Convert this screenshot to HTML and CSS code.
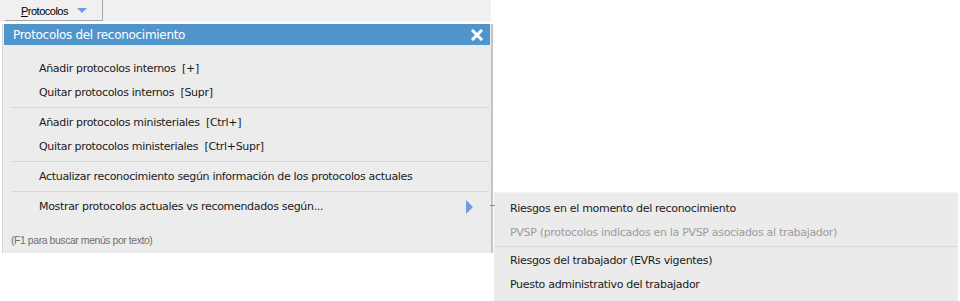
FILE: index.html
```html
<!DOCTYPE html>
<html lang="es">
<head>
  <meta charset="UTF-8" />
  <title>Protocolos</title>
  <link rel="stylesheet" href="styles.css">
</head>
<body>
  <div class="toolbar">
    <div class="menu-btn"><span class="btn-label"><u>P</u>rotocolos</span><span class="caret"></span></div>
  </div>

  <div class="panel">
    <div class="panel-head">
      <span>Protocolos del reconocimiento</span>
      <svg class="close" width="12" height="12" viewBox="0 0 12 12">
        <path d="M2 2 L10 10 M10 2 L2 10" stroke="#fff" stroke-width="3" stroke-linecap="square" />
      </svg>
    </div>

    <div class="menu">
      <div class="item">Añadir protocolos internos&nbsp; [+]</div>
      <div class="item">Quitar protocolos internos&nbsp; [Supr]</div>
      <div class="sep"></div>
      <div class="item">Añadir protocolos ministeriales&nbsp; [Ctrl+]</div>
      <div class="item">Quitar protocolos ministeriales&nbsp; [Ctrl+Supr]</div>
      <div class="sep"></div>
      <div class="item">Actualizar reconocimiento según información de los protocolos actuales</div>
      <div class="sep"></div>
      <div class="item has-sub">
        <span>Mostrar protocolos actuales vs recomendados según...</span>
        <span class="arrow"></span>
      </div>
    </div>

    <div class="hint">(F1 para buscar menús por texto)</div>
  </div>

  <div class="submenu">
    <span class="link-line"></span>
    <div class="item">Riesgos en el momento del reconocimiento</div>
    <div class="item disabled">PVSP (protocolos indicados en la PVSP asociados al trabajador)</div>
    <div class="sep"></div>
    <div class="item">Riesgos del trabajador (EVRs vigentes)</div>
    <div class="item">Puesto administrativo del trabajador</div>
  </div>
</body>
</html>
```

FILE: styles.css
```css
body {
  margin: 0;
  background: #fff;
  font-family: "DejaVu Sans", Verdana, sans-serif;
  font-size: 11px;
  letter-spacing: -0.32px;
  color: #1a1a1a;
}

.toolbar {
  width: 491px;
  height: 22px;
  background: #f0f0f0;
  border-bottom: 1px solid #f7f7f7;
  box-sizing: border-box;
  padding-left: 5px;
}

.menu-btn {
  width: 98px;
  height: 21px;
  display: flex;
  align-items: center;
  box-sizing: border-box;
  padding-left: 16px;
  padding-top: 1px;
  border-right: 1px solid #a8a8a8;
  border-bottom: 1px solid #a8a8a8;
  font-family: "Liberation Sans", Arial, sans-serif;
  font-size: 11px;
  letter-spacing: -0.5px;
  color: #000;
}

.caret {
  margin-left: 9px;
  width: 0;
  height: 0;
  border-left: 5px solid transparent;
  border-right: 5px solid transparent;
  border-top: 5px solid #6a9ee0;
}

.panel {
  width: 488px;
  margin-left: 2px;
  margin-top: 2px;
  background: #ececec;
  border-left: 1px solid #d4d4d4;
  border-right: 2px solid #c4c4c4;
  padding-bottom: 7px;
}

.panel-head {
  height: 21px;
  margin-left: 1px;
  margin-right: 1px;
  background: #4f95cc;
  color: #fff;
  font-size: 12px;
  letter-spacing: -0.3px;
  display: flex;
  align-items: center;
  justify-content: space-between;
  padding: 0 7px 0 9px;
}

.close {
  display: block;
}

.menu {
  padding: 12px 2px 0 8px;
}

.item {
  height: 24px;
  line-height: 24px;
  padding-left: 28px;
  white-space: nowrap;
}

.sep {
  height: 1px;
  background: #d8d8d8;
  margin: 2px 0 3px 0;
}

.has-sub {
  display: flex;
  justify-content: space-between;
  align-items: center;
  margin-top: 3px;
  padding-right: 16px;
}

.arrow {
  width: 0;
  height: 0;
  border-top: 7px solid transparent;
  border-bottom: 7px solid transparent;
  border-left: 7px solid #6a9ee0;
}

.hint {
  margin-top: 15px;
  padding-left: 8px;
  font-family: "Liberation Sans", Arial, sans-serif;
  font-size: 10.5px;
  letter-spacing: -0.45px;
  color: #707070;
}

.submenu {
  position: absolute;
  left: 494px;
  top: 192px;
  width: 464px;
  padding: 4px 0 4px 0;
  background: #ebebeb;
  border-top: 1px solid #f4f4f4;
}

.submenu .item {
  padding-left: 16px;
}

.submenu .disabled {
  color: #9c9c9c;
}

.submenu .sep {
  margin: 1px 0 2px 0;
}

.link-line {
  position: absolute;
  left: -4px;
  top: 12px;
  width: 5px;
  height: 1px;
  background: #2aa0e0;
}
```
